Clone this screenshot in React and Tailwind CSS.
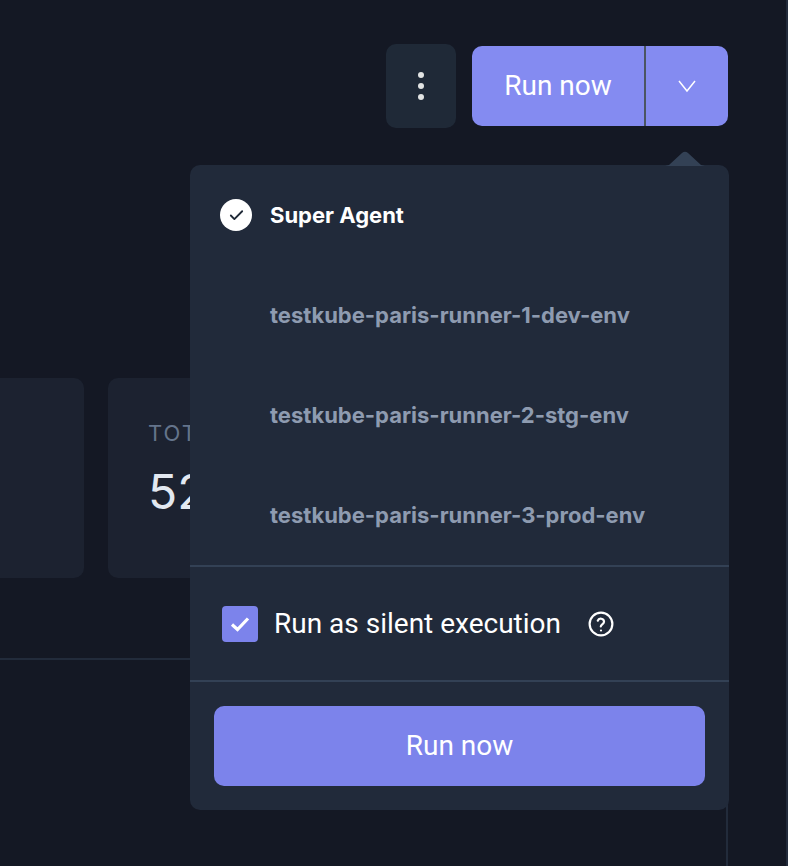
import React from 'react';
import { Check } from 'lucide-react';

const runners = [
  'testkube-paris-runner-1-dev-env',
  'testkube-paris-runner-2-stg-env',
  'testkube-paris-runner-3-prod-env',
];

const AgentRow = ({ name, selected }) => (
  <div className="flex items-center h-[100px] pl-[30px] pr-4">
    <span className="w-8 h-8 shrink-0 mr-[18px] flex items-center justify-center">
      {selected && (
        <span className="w-8 h-8 rounded-full bg-white flex items-center justify-center">
          <Check size={17} strokeWidth={2.6} className="text-[#1f2937]" />
        </span>
      )}
    </span>
    <span className={`font-['Inter',sans-serif] text-[22px] font-bold whitespace-nowrap ${selected ? 'text-white' : 'text-[#8e9bb0]'}`}>{name}</span>
  </div>
);

const Dropdown = () => (
  <div className="absolute left-[190px] top-[165px] w-[539px] h-[645px] bg-[#212a3a] rounded-[10px]">
    <svg className="absolute -top-[14px] right-[24px]" width="40" height="15" viewBox="0 0 40 15">
      <path d="M0 15 L4 14 L17 2 Q20 -0.5 23 2 L36 14 L40 15 Z" fill="#334155" />
    </svg>
    <div className="h-[400px]">
      <AgentRow name="Super Agent" selected />
      {runners.map((r) => <AgentRow key={r} name={r} />)}
    </div>
    <div className="h-[117px] border-y-2 border-[#334155] flex items-center pl-[32px]">
      <span className="w-9 h-9 rounded-[4px] bg-[#7c83eb] flex items-center justify-center mr-4">
        <svg width="20" height="16" viewBox="0 0 20 16" fill="none">
          <path d="M2 8.5 L7.5 13.5 L18 2.5" stroke="white" strokeWidth="3.2" />
        </svg>
      </span>
      <span className="text-[28px] text-white">Run as silent execution</span>
      <svg className="ml-[27px]" width="26" height="26" viewBox="0 0 24 24" fill="none" stroke="white" strokeWidth="2" strokeLinecap="round" strokeLinejoin="round">
        <circle cx="12" cy="12" r="10.5" />
        <path d="M9 9a3 3 0 0 1 5.8 1c0 2-3 2.6-3 4.2" />
        <path d="M12 18h.01" />
      </svg>
    </div>
    <div className="px-6 pt-6">
      <button className="w-full h-20 rounded-[10px] bg-[#7c83eb] text-white text-[28px]">Run now</button>
    </div>
  </div>
);

export default function App() {
  return (
    <div className="relative w-[788px] h-[866px] overflow-hidden bg-[#141824] font-['Roboto',sans-serif]">
      <div className="flex justify-end items-center gap-4 pt-11 pr-[60px]">
        <button className="w-[70px] h-[84px] rounded-[10px] bg-[#1f2937] flex flex-col items-center justify-center gap-[5px]">
          <span className="w-1.5 h-1.5 rounded-full bg-[#e2e4e3]" />
          <span className="w-1.5 h-1.5 rounded-full bg-[#e2e4e3]" />
          <span className="w-1.5 h-1.5 rounded-full bg-[#e2e4e3]" />
        </button>
        <div className="flex h-20 w-[256px] rounded-[10px] bg-[#848bf1] text-white">
          <button className="w-[174px] text-[28px] border-r-2 border-[#4b5563]">Run now</button>
          <button className="flex-1 flex items-center justify-center">
            <svg width="18" height="14" viewBox="0 0 18 14" fill="none" stroke="white" strokeWidth="1.5">
              <path d="M1 2 L9 12 L17 2" />
            </svg>
          </button>
        </div>
      </div>

      <div className="flex gap-6 mt-[250px] -ml-[100px]">
        <div className="w-[184px] h-[200px] rounded-[10px] bg-[#1c2230]" />
        <div className="w-[300px] h-[200px] rounded-[10px] bg-[#1c2230] pl-10 pt-[41px] font-['Inter',sans-serif]">
          <div className="text-[22px] tracking-[2px] text-[#64748b] leading-[28px]">TOTAL</div>
          <div className="text-[48px] text-[#e2e8f0] mt-[21px] leading-none">52</div>
        </div>
      </div>

      <div className="mt-[80px] w-[728px] h-[208px] border-t-2 border-r-2 border-[#222b3b]" />

      <div className="absolute right-0 top-0 bottom-0 w-0.5 bg-[#222b3b]" />
      <Dropdown />
    </div>
  );
}
